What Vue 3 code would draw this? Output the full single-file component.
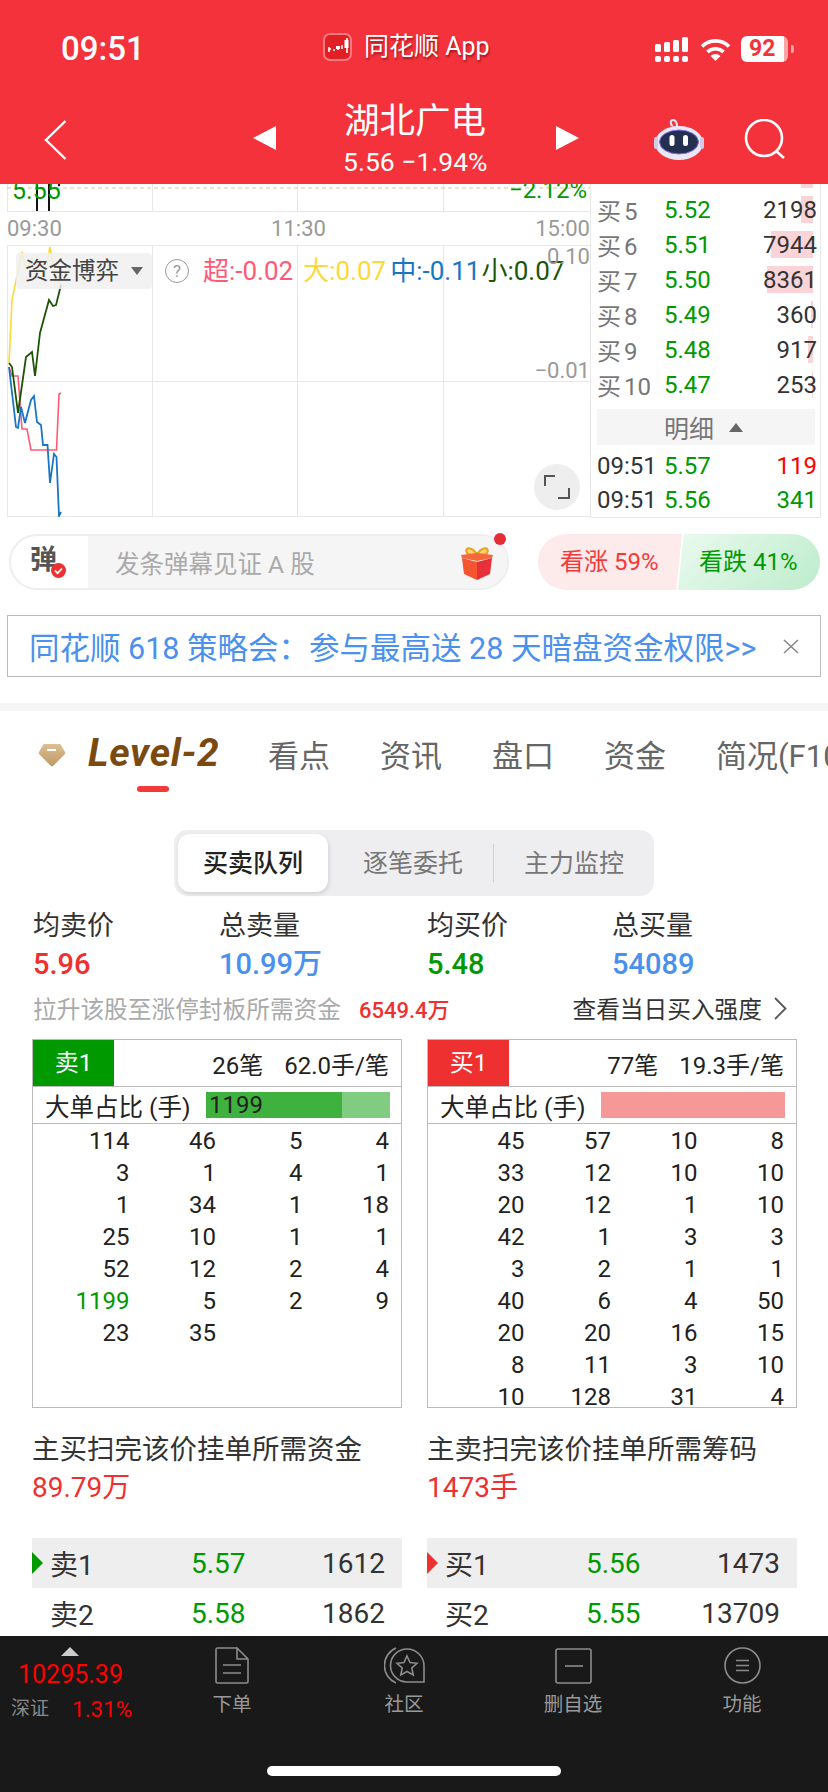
<script setup>
const askRows = [
  { label: '买 5', price: '5.52', qty: 2198, bar: 12 },
  { label: '买 6', price: '5.51', qty: 7944, bar: 42 },
  { label: '买 7', price: '5.50', qty: 8361, bar: 46 },
  { label: '买 8', price: '5.49', qty: 360, bar: 2 },
  { label: '买 9', price: '5.48', qty: 917, bar: 5 },
  { label: '买 10', price: '5.47', qty: 253, bar: 1 },
]
const ticks = [
  { time: '09:51', price: '5.57', qty: 119, color: 'red' },
  { time: '09:51', price: '5.56', qty: 341, color: 'green' },
]
const tabs = ['看点', '资讯', '盘口', '资金', '简况(F10)']
const stats = [
  { label: '均卖价', value: '5.96', cls: 'c-red', width: 186 },
  { label: '总卖量', value: '10.99万', cls: 'c-blue', width: 208 },
  { label: '均买价', value: '5.48', cls: 'c-green', width: 185 },
  { label: '总买量', value: '54089', cls: 'c-blue', width: 150 },
]
const sides = [
  {
    head: '卖1',
    headCls: 'bg-green',
    count: '26笔',
    avg: '62.0手/笔',
    barCls: 'bar-green',
    barText: '1199',
    barPct: 74,
    orders: [
      114, 46, 5, 4, 3, 1, 4, 1, 1, 34, 1, 18, 25, 10, 1, 1, 52, 12, 2, 4, 1199, 5, 2, 9, 23, 35, '', '',
    ],
    caption: '主买扫完该价挂单所需资金',
    need: '89.79万',
    ladder: [
      { label: '卖1', price: '5.57', qty: 1612, on: true },
      { label: '卖2', price: '5.58', qty: 1862 },
    ],
    arrow: '#009900',
  },
  {
    head: '买1',
    headCls: 'bg-red',
    count: '77笔',
    avg: '19.3手/笔',
    barCls: 'bar-red',
    barText: '',
    barPct: 100,
    orders: [
      45, 57, 10, 8, 33, 12, 10, 10, 20, 12, 1, 10, 42, 1, 3, 3, 3, 2, 1, 1, 40, 6, 4, 50, 20, 20, 16, 15, 8, 11,
      3, 10, 10, 128, 31, 4,
    ],
    caption: '主卖扫完该价挂单所需筹码',
    need: '1473手',
    ladder: [
      { label: '买1', price: '5.56', qty: 1473, on: true },
      { label: '买2', price: '5.55', qty: 13709 },
    ],
    arrow: '#ee3030',
  },
]
const lines = {
  yellow: '9,363 12,300 22,252 26,270 32,258 37,268 45,275 50,247 54,270 60,285',
  pink: '9,367 12,376 18,376 22,429 27,429 31,450 56.5,450 59,394 61,393',
  blue: '9,367 16,427 18,428 21,407 25,423 31,400 34,396 37,422 41,425 43,445 47.5,445 50,483 54,454 56.5,457 59,516 61,512',
  dark: '9,363 12,367 18,413 26,357 32,352 35,376 40,333 49,300 53,306 56,305 61,285',
}
</script>

<template>
  <div class="page">
    <header class="top">
      <div class="status">
        <span class="clock">09:51</span>
        <div class="from">
          <svg class="logo" width="29" height="28" viewBox="0 0 29 28">
            <rect x="1" y="1" width="27" height="26" rx="6" fill="#e02024" stroke="#f47a7e" stroke-width="2" />
            <path d="M6 16h2M6 14v5M11 16v2M15 13v4M19 12v4M24 5v15" stroke="#fff" stroke-width="1.6" fill="none" />
            <rect x="21.5" y="7" width="4" height="8" fill="#fff" />
            <rect x="13" y="13" width="4" height="3" fill="#fff" />
          </svg>
          <span class="from-text">同花顺 App</span>
        </div>
        <div class="sys">
          <svg width="33" height="25" viewBox="0 0 33 25" fill="#fff">
            <rect x="0" y="7" width="6" height="8" rx="1.5" />
            <rect x="9" y="5" width="6" height="10" rx="1.5" />
            <rect x="18" y="3" width="6" height="12" rx="1.5" />
            <rect x="27" y="0" width="6" height="15" rx="1.5" />
            <rect x="0" y="19" width="6" height="6" rx="2" />
            <rect x="9" y="19" width="6" height="6" rx="2" />
            <rect x="18" y="19" width="6" height="6" rx="2" />
            <rect x="27" y="19" width="6" height="6" rx="2" />
          </svg>
          <svg width="31" height="23" viewBox="0 0 31 23" fill="none" stroke="#fff" stroke-width="3.6">
            <path d="M2 8.5a19 19 0 0 1 27 0" />
            <path d="M7.5 14a11.5 11.5 0 0 1 16 0" />
            <path d="M15.5 23l-5-5a7 7 0 0 1 10 0z" fill="#fff" stroke="none" />
          </svg>
          <div class="batt"><span class="batt-num">92</span></div>
          <i class="batt-nub"></i>
        </div>
      </div>
      <div class="nav">
        <svg class="back" width="23" height="40" viewBox="0 0 23 40" fill="none" stroke="#fff" stroke-width="2.4">
          <path d="M21.5 1 2 20l19.5 19" />
        </svg>
        <i class="tri-left"></i>
        <div class="stock">
          <div class="stock-name">湖北广电</div>
          <div class="stock-price">5.56 −1.94%</div>
        </div>
        <i class="tri-right"></i>
        <svg class="robot" width="50" height="44" viewBox="0 0 50 44">
          <path d="M19 9c-3-1-3-6 0-6s4 2 4 7" fill="none" stroke="#e8e4f4" stroke-width="2" />
          <ellipse cx="25" cy="26" rx="24" ry="17" fill="#e9e8f6" />
          <rect x="0" y="20" width="4" height="12" rx="2" fill="#cfcde6" />
          <rect x="46" y="20" width="4" height="12" rx="2" fill="#cfcde6" />
          <ellipse cx="25" cy="25" rx="19.5" ry="12" fill="#23304f" stroke="#8a6be0" stroke-width="1" />
          <rect x="15.5" y="18" width="5" height="11" rx="2.5" fill="#fff" />
          <rect x="29" y="18" width="5" height="11" rx="2.5" fill="#fff" />
        </svg>
        <svg class="search" width="42" height="40" viewBox="0 0 42 40" fill="none" stroke="#fff" stroke-width="2.6">
          <circle cx="20" cy="19" r="18" />
          <path d="M32 32l8 7" />
        </svg>
      </div>
    </header>

    <main class="main">
      <section class="market">
        <div class="charts">
          <div class="price-chart">
            <svg width="583" height="28" viewBox="7 184 583 28">
              <path d="M7.5 184V212M152.5 184V212M297.5 184V212M443.5 184V212M7 211.5H590" stroke="#e8e8e8" fill="none" />
              <path d="M7 188H590" stroke="#d9c39a" stroke-dasharray="4 3" fill="none" />
              <path d="M37 184V211M49 184V211" stroke="#111" stroke-width="2" fill="none" />
              <circle cx="59" cy="185" r="1.2" fill="#111" />
            </svg>
            <span class="pc-low">5.55</span>
            <span class="pc-pct">−2.12%</span>
          </div>
          <div class="axis"><span>09:30</span><span>11:30</span><span>15:00</span></div>
          <div class="flow-chart">
            <svg width="583" height="272" viewBox="7 245 583 272">
              <path
                d="M7.5 245V517M152.5 245V517M297.5 245V517M443.5 245V517M7 245.5H590M7 381.5H590M7 516.5H590"
                stroke="#e8e8e8"
                fill="none"
              />
              <polyline :points="lines.yellow" stroke="#fdd83a" stroke-width="1.6" fill="none" />
              <polyline :points="lines.pink" stroke="#ff5a75" stroke-width="1.6" fill="none" />
              <polyline :points="lines.blue" stroke="#1a75c4" stroke-width="1.8" fill="none" />
              <polyline :points="lines.dark" stroke="#1c5508" stroke-width="1.8" fill="none" />
            </svg>
            <div class="flow-legend">
              <div class="chip">资金博弈<i class="chip-tri"></i></div>
              <span class="help">?</span>
              <span class="lg-pink">超:-0.02</span>
              <span class="lg-yellow">大:0.07</span>
              <span class="lg-blue">中:-0.11</span>
              <span class="lg-dark">小:0.07</span>
            </div>
            <span class="scale scale-hi">0.10</span>
            <span class="scale scale-lo">−0.01</span>
            <button class="expand">
              <svg width="26" height="24" viewBox="0 0 26 24" fill="none" stroke="#555" stroke-width="2">
                <path d="M1 11V1h10M25 13v10H14" />
              </svg>
            </button>
          </div>
        </div>
        <aside class="book">
          <div class="book-stub"><i></i></div>
          <div v-for="row in askRows" :key="row.label" class="book-row">
            <span class="b-label">{{ row.label }}</span>
            <span class="b-price">{{ row.price }}</span>
            <span class="b-qty">{{ row.qty }}</span>
            <i class="b-bar" :style="{ width: row.bar + 'px' }"></i>
          </div>
          <div class="detail-head">明细<i class="detail-tri"></i></div>
          <div v-for="(tick, i) in ticks" :key="i" class="tick-row">
            <span class="b-time">{{ tick.time }}</span>
            <span class="b-price">{{ tick.price }}</span>
            <span class="b-qty" :class="'t-' + tick.color">{{ tick.qty }}</span>
          </div>
        </aside>
      </section>

      <section class="danmaku">
        <div class="dm-input">
          <div class="dm-left">
            <span class="dm-char">弹</span>
            <svg class="dm-check" width="15" height="15" viewBox="0 0 15 15">
              <circle cx="7.5" cy="7.5" r="7.5" fill="#ee3030" />
              <path d="M4 7.5l2.6 2.6L11 5.5" fill="none" stroke="#fff" stroke-width="1.8" />
            </svg>
          </div>
          <div class="dm-text">
            <span>发条弹幕见证 A 股</span>
            <svg class="gift" width="34" height="35" viewBox="0 0 34 35">
              <path d="M17 9C10 0 4 3 7 8c1 2 6 2 10 1zM17 9c7-9 13-6 10-1-1 2-6 2-10 1z" fill="#fbd36a" stroke="#e8a020" stroke-width="2" />
              <path d="M1 10l16-2 16 2-1 3-15 3L2 13z" fill="#f4683a" />
              <path d="M2 13l15 4v18L4 29z" fill="#f2552f" />
              <path d="M32 13l-15 4v18l13-6z" fill="#e8303a" />
            </svg>
          </div>
          <i class="dm-dot"></i>
        </div>
        <div class="vote">
          <div class="vote-up">看涨 59%</div>
          <div class="vote-down">看跌 41%</div>
        </div>
      </section>

      <section class="notice">
        <span class="notice-text">同花顺 618 策略会：参与最高送 28 天暗盘资金权限&gt;&gt;</span>
        <svg width="16" height="15" viewBox="0 0 16 15" fill="none" stroke="#888" stroke-width="1.6">
          <path d="M1 1l14 13M15 1L1 14" />
        </svg>
      </section>

      <div class="band"></div>

      <nav class="tabs">
        <svg class="gem" width="28" height="24" viewBox="0 0 28 24">
          <defs>
            <linearGradient id="gem" x1="0" y1="0" x2="0" y2="1">
              <stop offset="0" stop-color="#dcbf92" />
              <stop offset="1" stop-color="#bf9a66" />
            </linearGradient>
          </defs>
          <path d="M7 1h14a2 2 0 0 1 2 1l4 7a2 2 0 0 1 0 2L15 23a1.5 1.5 0 0 1-2 0L1 11a2 2 0 0 1 0-2l4-7a2 2 0 0 1 2-1z" fill="url(#gem)" />
          <rect x="9" y="6" width="9" height="2" fill="#fff" />
        </svg>
        <span class="level">Level-2</span>
        <span v-for="tab in tabs" :key="tab" class="tab">{{ tab }}</span>
      </nav>
      <div class="tab-line"></div>

      <div class="seg">
        <span class="seg-item seg-on">买卖队列</span>
        <span class="seg-item seg-mid">逐笔委托</span>
        <i class="seg-div"></i>
        <span class="seg-item seg-last">主力监控</span>
      </div>

      <div class="stats">
        <div v-for="stat in stats" :key="stat.label" class="stat" :style="{ width: stat.width + 'px' }">
          <div class="stat-label">{{ stat.label }}</div>
          <div class="stat-value" :class="stat.cls">{{ stat.value }}</div>
        </div>
      </div>

      <div class="lift">
        <span class="lift-label">拉升该股至涨停封板所需资金</span>
        <span class="lift-num">6549.4万</span>
        <span class="lift-link">查看当日买入强度</span>
        <svg width="13" height="23" viewBox="0 0 13 23" fill="none" stroke="#555" stroke-width="1.8">
          <path d="M1 1l10.5 10.5L1 22" />
        </svg>
      </div>

      <div class="sides">
        <div v-for="side in sides" :key="side.head" class="side">
          <div class="queue">
            <div class="q-head">
              <span class="q-tag" :class="side.headCls">{{ side.head }}</span>
              <span class="q-count">{{ side.count }}</span>
              <span class="q-avg">{{ side.avg }}</span>
            </div>
            <div class="q-big">
              <span class="q-big-label">大单占比 (手)</span>
              <div class="q-bar" :class="side.barCls">
                <div class="q-bar-fill" :style="{ width: side.barPct + '%' }">{{ side.barText }}</div>
              </div>
            </div>
            <div class="q-grid">
              <span v-for="(n, i) in side.orders" :key="i" :class="{ 'c-green': n === 1199 }">{{ n }}</span>
            </div>
          </div>
          <div class="caption">{{ side.caption }}</div>
          <div class="need">{{ side.need }}</div>
          <div class="ladder">
            <div v-for="lv in side.ladder" :key="lv.label" class="lv" :class="{ 'lv-on': lv.on }">
              <i v-if="lv.on" class="lv-arrow" :style="{ borderLeftColor: side.arrow }"></i>
              <span class="lv-label">{{ lv.label }}</span>
              <span class="lv-price">{{ lv.price }}</span>
              <span class="lv-qty">{{ lv.qty }}</span>
            </div>
          </div>
        </div>
      </div>
    </main>

    <footer class="foot">
      <div class="foot-row">
        <div class="index">
          <i class="index-tri"></i>
          <div class="index-val">10295.39</div>
          <div class="index-sub"><span>深证</span><b>1.31%</b></div>
        </div>
        <div class="foot-item">
          <svg width="34" height="37" viewBox="0 0 34 37" fill="none" stroke="#8c8c8c" stroke-width="1.6">
            <path d="M22 1H2.5A1.5 1.5 0 0 0 1 2.5V34.5A1.5 1.5 0 0 0 2.5 36H31.5A1.5 1.5 0 0 0 33 34.5V12L22 1V12H33" />
            <path d="M8 18H26M8 26H26" />
          </svg>
          <span>下单</span>
        </div>
        <div class="foot-item">
          <svg width="41" height="37" viewBox="0 0 41 37" fill="none" stroke="#8c8c8c" stroke-width="1.6">
            <path d="M23 2A17 17 0 0 1 40 19V35H23A16.5 16.5 0 0 1 23 2Z" />
            <path d="M12 1A19 19 0 0 0 12 36" />
            <path d="M23 9l3 6.5 7 .8-5.2 4.7 1.4 7-6.2-3.5-6.2 3.5 1.4-7-5.2-4.7 7-.8z" />
          </svg>
          <span>社区</span>
        </div>
        <div class="foot-item">
          <svg width="37" height="37" viewBox="0 0 37 37" fill="none" stroke="#8c8c8c" stroke-width="1.6">
            <rect x="1" y="2" width="35" height="34" rx="2" />
            <path d="M10 19H28" />
          </svg>
          <span>删自选</span>
        </div>
        <div class="foot-item">
          <svg width="37" height="37" viewBox="0 0 37 37" fill="none" stroke="#8c8c8c" stroke-width="1.6">
            <circle cx="18.5" cy="18.5" r="17.5" />
            <path d="M12 13.5H25M12 18.5H25M12 23.5H25" />
          </svg>
          <span>功能</span>
        </div>
      </div>
      <div class="home-bar"></div>
    </footer>
  </div>
</template>

<style>
html,
body {
  margin: 0;
  background: #fff;
}
</style>

<style scoped>
.page {
  width: 828px;
  height: 1792px;
  display: flex;
  flex-direction: column;
  overflow: hidden;
  background: #fff;
  font-family: Roboto, "Noto Sans CJK SC", sans-serif;
  color: #333;
}
i {
  display: block;
  font-style: normal;
}
.c-red {
  color: #ee3030;
}
.c-blue {
  color: #4a90ee;
}
.c-green {
  color: #009900;
}

/* header */
.top {
  height: 184px;
  flex: none;
  background: #f3323b;
  color: #fff;
  position: relative;
  z-index: 2;
}
.status {
  height: 94px;
  display: flex;
  align-items: flex-start;
}
.clock {
  margin: 30px 0 0 61px;
  width: 262px;
  flex: none;
  font-size: 33px;
  line-height: 38px;
  font-weight: 500;
}
.from {
  display: flex;
  align-items: center;
  margin-top: 30px;
  width: 332px;
  flex: none;
}
.from-text {
  margin-left: 12px;
  font-size: 25px;
  line-height: 34px;
  text-shadow: 1px 2px 2px rgba(110, 0, 10, 0.55);
}
.sys {
  display: flex;
  align-items: flex-start;
  margin-top: 37px;
  gap: 12px;
}
.sys svg + svg {
  margin-top: 1px;
}
.batt {
  width: 47px;
  height: 26px;
  margin: -1px 0 0 -2px;
  border-radius: 6px;
  background: linear-gradient(90deg, #fff 92%, #f9a5a8 92%);
  display: flex;
  align-items: center;
  padding-left: 8px;
  box-sizing: border-box;
}
.batt-num {
  color: #f3323b;
  font-size: 23px;
  font-weight: 700;
  line-height: 26px;
}
.batt-nub {
  width: 3px;
  height: 8px;
  margin: 8px 0 0 -9px;
  background: #f9a5a8;
  border-radius: 0 2px 2px 0;
}
.nav {
  height: 90px;
  display: flex;
  align-items: flex-start;
}
.back {
  margin: 26px 0 0 44px;
}
.tri-left {
  width: 0;
  height: 0;
  margin: 32px 0 0 186px;
  border-style: solid;
  border-width: 12.5px 23px 12.5px 0;
  border-color: transparent #fff transparent transparent;
}
.stock {
  width: 144px;
  margin: 4px 0 0 67px;
  text-align: center;
}
.stock-name {
  font-size: 35.5px;
  line-height: 46px;
}
.stock-price {
  font-size: 26.5px;
  line-height: 32px;
  margin-top: 2px;
  white-space: nowrap;
}
.tri-right {
  width: 0;
  height: 0;
  margin: 32px 0 0 69px;
  border-style: solid;
  border-width: 12.5px 0 12.5px 23px;
  border-color: transparent transparent transparent #fff;
}
.robot {
  margin: 23px 0 0 75px;
}
.search {
  margin: 25px 0 0 40px;
}

/* chart block */
.main {
  flex: 1;
  min-height: 0;
  overflow: hidden;
}
.market {
  display: flex;
  height: 334px;
  padding-left: 7px;
}
.charts {
  width: 583px;
  flex: none;
}
.price-chart {
  height: 28px;
  position: relative;
}
.price-chart svg,
.flow-chart svg {
  display: block;
}
.pc-low {
  position: absolute;
  left: 5px;
  top: -8px;
  font-size: 25px;
  line-height: 30px;
  color: #009900;
}
.pc-pct {
  position: absolute;
  right: 3px;
  top: -9px;
  font-size: 24px;
  line-height: 30px;
  color: #009900;
}
.axis {
  height: 33px;
  display: flex;
  justify-content: space-between;
  align-items: center;
  font-size: 22px;
  color: #999;
}
.flow-chart {
  height: 272px;
  position: relative;
}
.flow-legend {
  position: absolute;
  left: 9px;
  top: 8px;
  display: flex;
  align-items: center;
  font-size: 26px;
  line-height: 36px;
  white-space: nowrap;
}
.chip {
  width: 136px;
  height: 36px;
  box-sizing: border-box;
  padding-left: 9px;
  display: flex;
  align-items: center;
  background: rgba(240, 240, 240, 0.85);
  border-radius: 4px;
  font-size: 23.5px;
  color: #444;
}
.chip-tri {
  width: 0;
  height: 0;
  margin-left: 12px;
  border-style: solid;
  border-width: 8px 6.5px 0;
  border-color: #666 transparent transparent;
}
.help {
  width: 22px;
  height: 22px;
  margin: 0 14px 0 13px;
  border: 1.5px solid #999;
  border-radius: 50%;
  font-size: 17px;
  line-height: 22px;
  text-align: center;
  color: #999;
}
.lg-pink {
  color: #ff5a75;
}
.lg-yellow {
  color: #fdd83a;
  margin-left: 10px;
}
.lg-blue {
  color: #1a75c4;
  margin-left: 4px;
}
.lg-dark {
  color: #1c5508;
  margin-left: 1px;
}
.scale {
  position: absolute;
  right: 0;
  font-size: 22px;
  line-height: 26px;
  color: #999;
}
.scale-hi {
  top: -1px;
}
.scale-lo {
  top: 113px;
}
.expand {
  position: absolute;
  left: 527px;
  top: 219px;
  width: 46px;
  height: 46px;
  padding: 0;
  border: 0;
  border-radius: 50%;
  background: #eee;
  display: flex;
  align-items: center;
  justify-content: center;
}
.book {
  width: 231px;
  flex: none;
  box-sizing: border-box;
  border-left: 1px solid #e8e8e8;
  border-right: 1px solid #e8e8e8;
  border-bottom: 1px solid #e8e8e8;
  overflow: hidden;
}
.book-stub {
  height: 8px;
  position: relative;
}
.book-stub i {
  position: absolute;
  right: 7px;
  top: 0;
  width: 12px;
  height: 4px;
  background: #fad4d6;
}
.book-row,
.tick-row {
  height: 35px;
  position: relative;
  display: flex;
  align-items: center;
  padding: 0 3px 0 6px;
  font-size: 24px;
}
.tick-row {
  height: 34px;
}
.b-label {
  width: 67px;
  flex: none;
  color: #777;
  white-space: nowrap;
  word-spacing: -3px;
}
.b-time {
  width: 67px;
  flex: none;
  color: #333;
}
.b-price {
  color: #009900;
}
.b-qty {
  margin-left: auto;
  color: #333;
  position: relative;
  z-index: 1;
}
.t-red {
  color: #f00;
}
.t-green {
  color: #009900;
}
.b-bar {
  position: absolute;
  right: 7px;
  top: 4px;
  height: 27px;
  background: #fad4d6;
}
.detail-head {
  height: 36px;
  margin: 7px 5px 4px 6px;
  padding-left: 67px;
  background: #f5f5f5;
  display: flex;
  align-items: center;
  font-size: 25px;
  color: #777;
}
.detail-tri {
  width: 0;
  height: 0;
  margin-left: 15px;
  border-style: solid;
  border-width: 0 7px 9px;
  border-color: transparent transparent #666;
}

/* danmaku + vote */
.danmaku {
  display: flex;
  margin-top: 16px;
  height: 56px;
  padding-left: 9px;
}
.dm-input {
  width: 500px;
  flex: none;
  box-sizing: border-box;
  border: 2px solid #eee;
  border-radius: 28px;
  display: flex;
  position: relative;
}
.dm-left {
  width: 77px;
  flex: none;
  box-sizing: border-box;
  position: relative;
  padding-left: 19px;
  font-size: 27px;
  font-weight: 700;
  line-height: 48px;
  color: #555;
}
.dm-check {
  position: absolute;
  left: 40px;
  top: 27px;
}
.dm-text {
  flex: 1;
  display: flex;
  align-items: center;
  justify-content: space-between;
  padding: 0 13px 0 27px;
  background: #f5f5f5;
  border-radius: 0 26px 26px 0;
  font-size: 24.5px;
  color: #aaa;
}
.dm-dot {
  position: absolute;
  right: 1px;
  top: -3px;
  width: 12px;
  height: 12px;
  border-radius: 50%;
  background: #e62c34;
}
.vote {
  display: flex;
  margin-left: 29px;
  font-size: 24px;
  line-height: 56px;
}
.vote-up {
  width: 144px;
  height: 56px;
  box-sizing: border-box;
  padding-left: 22px;
  background: #fdeaea;
  color: #f33a3a;
  border-radius: 28px 0 0 28px;
  clip-path: polygon(0 0, 100% 0, 96% 100%, 0 100%);
}
.vote-down {
  width: 142px;
  height: 56px;
  margin-left: -4px;
  box-sizing: border-box;
  padding-left: 21px;
  background: linear-gradient(135deg, #eafaef, #bdeccb);
  color: #009900;
  border-radius: 0 28px 28px 0;
  clip-path: polygon(4% 0, 100% 0, 100% 100%, 0 100%);
}

/* notice */
.notice {
  margin: 25px 7px 0;
  height: 62px;
  box-sizing: border-box;
  border: 1px solid #bbb;
  display: flex;
  align-items: center;
  justify-content: space-between;
  padding: 0 21px;
  font-size: 30.5px;
  color: #4a90ee;
  white-space: nowrap;
}
.band {
  height: 8px;
  margin-top: 26px;
  background: #f5f5f5;
}

/* tabs */
.tabs {
  height: 62px;
  box-sizing: border-box;
  padding: 0 0 4px 38px;
  margin-top: 13px;
  display: flex;
  align-items: center;
  overflow: hidden;
  white-space: nowrap;
}
.gem {
  flex: none;
  margin-top: 4px;
}
.level {
  margin: 0 49px 0 22px;
  width: 131px;
  flex: none;
  font-size: 39px;
  font-weight: 700;
  font-style: italic;
  letter-spacing: 0.7px;
  color: #7a4a10;
}
.tab {
  flex: none;
  font-size: 31px;
  color: #666;
  margin-right: 50px;
}
.tab-line {
  width: 32px;
  height: 6px;
  margin-left: 137px;
  border-radius: 3px;
  background: #f33a3a;
}

/* segmented */
.seg {
  width: 480px;
  height: 66px;
  margin: 38px auto 0;
  box-sizing: border-box;
  padding: 4px;
  background: #eeeef0;
  border-radius: 14px;
  display: flex;
  align-items: center;
  font-size: 25px;
  color: #777;
}
.seg-item {
  width: 150px;
  height: 58px;
  line-height: 60px;
  text-align: center;
  flex: none;
}
.seg-mid {
  margin-left: 10px;
}
.seg-last {
  width: 130px;
  margin-left: 15px;
}
.seg-on {
  background: #fff;
  color: #222;
  font-weight: 500;
  border-radius: 12px;
  box-shadow: 1px 2px 4px rgba(0, 0, 0, 0.12);
}
.seg-div {
  width: 1px;
  height: 38px;
  flex: none;
  margin-left: 5px;
  background: #d0d0d2;
}

/* stats */
.stats {
  display: flex;
  padding-left: 33px;
  margin-top: 16px;
}
.stat-label {
  font-size: 27px;
  line-height: 28px;
}
.stat-value {
  font-size: 29px;
  font-weight: 500;
  line-height: 38px;
  margin-top: 5px;
}
.lift {
  display: flex;
  align-items: center;
  height: 32px;
  margin: 9px 41px 0 33px;
}
.lift-label {
  font-size: 23.7px;
  color: #aaa;
}
.lift-num {
  margin-left: 18px;
  font-size: 22px;
  font-weight: 500;
  color: #ee3030;
}
.lift-link {
  margin: 0 12px 0 auto;
  font-size: 23.7px;
  color: #333;
}

/* queues */
.sides {
  display: flex;
  gap: 25px;
  margin-top: 15px;
  padding-left: 32px;
}
.side {
  width: 370px;
  flex: none;
}
.queue {
  height: 369px;
  box-sizing: border-box;
  border: 1px solid #bbb;
  overflow: hidden;
  color: #222;
  font-size: 24px;
}
.q-head {
  height: 46px;
  display: flex;
  align-items: center;
  border-bottom: 1px solid #bbb;
}
.q-tag {
  width: 81px;
  height: 46px;
  line-height: 46px;
  text-align: center;
  color: #fff;
}
.bg-green {
  background: #009900;
}
.bg-red {
  background: #ee3030;
}
.q-count {
  margin-left: auto;
}
.q-avg {
  margin: 0 12px 0 21px;
}
.q-big {
  height: 36px;
  display: flex;
  align-items: center;
  border-bottom: 1px solid #bbb;
  padding: 0 10px 0 12px;
}
.q-big-label {
  width: 161px;
  flex: none;
  font-size: 24.5px;
  white-space: nowrap;
}
.q-bar {
  width: 184px;
  height: 26px;
  flex: none;
}
.bar-green {
  background: #80cc80;
}
.bar-red {
  background: #f59898;
}
.q-bar-fill {
  height: 26px;
  line-height: 26px;
  padding-left: 3px;
  box-sizing: border-box;
  white-space: nowrap;
}
.bar-green .q-bar-fill {
  background: #3eb13e;
}
.bar-red .q-bar-fill {
  background: #f59898;
}
.q-grid {
  display: grid;
  grid-template-columns: repeat(4, 86.5px);
  grid-auto-rows: 32px;
  padding: 1px 0 0 10px;
  text-align: right;
  line-height: 32px;
}
.caption {
  margin-top: 24px;
  font-size: 27.5px;
  line-height: 36px;
  color: #333;
}
.need {
  margin-top: 2px;
  font-size: 28px;
  line-height: 36px;
  color: #ee3030;
}
.ladder {
  margin-top: 32px;
}
.lv {
  height: 50px;
  display: flex;
  align-items: center;
  position: relative;
  font-size: 28px;
  padding-left: 18px;
}
.lv-on {
  background: #eee;
}
.lv-arrow {
  position: absolute;
  left: 0;
  top: 14px;
  width: 0;
  height: 0;
  border-style: solid;
  border-width: 11.5px 0 11.5px 11px;
  border-color: transparent transparent transparent #009900;
}
.lv-label {
  width: 141px;
  flex: none;
}
.lv-price {
  color: #009900;
}
.lv-qty {
  margin: 0 17px 0 auto;
}

/* footer */
.foot {
  height: 156px;
  flex: none;
  background: #191919;
}
.foot-row {
  height: 120px;
  display: grid;
  grid-template-columns: 146px 172px 172px 166px 172px;
}
.index {
  padding: 11px 0 0 18px;
  box-sizing: border-box;
}
.index-tri {
  width: 0;
  height: 0;
  margin-left: 43px;
  border-style: solid;
  border-width: 0 9px 9px;
  border-color: transparent transparent #ccc;
}
.index-val {
  margin-top: 3px;
  font-size: 25px;
  line-height: 32px;
  color: #f00;
  white-space: nowrap;
}
.index-sub {
  display: flex;
  align-items: center;
  margin: 3px 0 0 -7px;
  line-height: 30px;
}
.index-sub span {
  width: 61px;
  flex: none;
  font-size: 19px;
  color: #888;
}
.index-sub b {
  font-size: 22.5px;
  font-weight: 400;
  color: #f00;
}
.foot-item {
  display: flex;
  flex-direction: column;
  align-items: center;
  padding-top: 11px;
  box-sizing: border-box;
  font-size: 19.5px;
  color: #999;
}
.foot-item span {
  margin-top: 7px;
  line-height: 28px;
}
.home-bar {
  width: 294px;
  height: 10px;
  margin: 10px auto 0;
  border-radius: 5px;
  background: #fff;
}
</style>
